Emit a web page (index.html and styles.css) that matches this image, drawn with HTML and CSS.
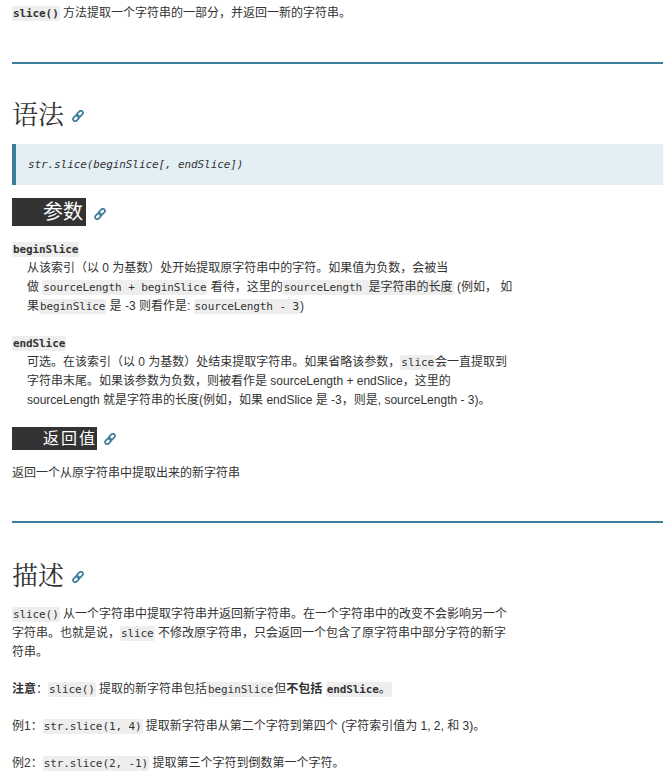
FILE: index.html
```html
<!DOCTYPE html>
<html lang="zh-CN">
<head>
<meta charset="utf-8">
<title>slice</title>
<link rel="stylesheet" href="styles.css">
</head>
<body>
<svg class="sprite" width="0" height="0" aria-hidden="true">
  <symbol id="link" viewBox="0 0 14 14">
    <g fill="none" stroke="currentColor" stroke-width="2">
      <rect x="0.6" y="4.6" width="8" height="4.8" rx="2.4" transform="rotate(-45 4.6 7) translate(-1.6 1.9)"/>
      <rect x="5.4" y="4.6" width="8" height="4.8" rx="2.4" transform="rotate(-45 9.4 7) translate(1.6 -1.9)"/>
    </g>
  </symbol>
</svg>
<main class="page">
  <p class="text"><code class="strong">slice()</code> 方法提取一个字符串的一部分，并返回一新的字符串。</p>
  <hr class="rule rule-first">
  <h2 class="title title-first">语法 <a class="anchor"><svg class="icon"><use href="#link"/></svg></a></h2>
  <pre class="syntax"><code>str.slice(beginSlice[, endSlice])</code></pre>
  <h3 class="bar bar-large"><span class="bar-label">参数</span><a class="anchor"><svg class="icon"><use href="#link"/></svg></a></h3>
  <dl class="params">
    <dt><code class="strong">beginSlice</code></dt>
    <dd>从该索引（以 0 为基数）处开始提取原字符串中的字符。如果值为负数，会被当<span class="keep">做 <code>sourceLength + beginSlice</code></span> 看待，这里的<code>sourceLength <span class="cjk">是字符串的长度</span></code> (例如， 如果<code>beginSlice</code> 是 -3 则看作是: <code>sourceLength - 3</code>)</dd>
    <dt><code class="strong">endSlice</code></dt>
    <dd>可选。在该索引（以 0 为基数）处结束提取字符串。如果省略该参数，<code>slice</code>会一直提取到字符串末尾。如果该参数为负数，则被看作是 sourceLength + endSlice，这里的 sourceLength 就是字符串的长度(例如，如果 endSlice 是 -3，则是, sourceLength - 3)。</dd>
  </dl>
  <h4 class="bar bar-small"><span class="bar-label">返回值</span><a class="anchor"><svg class="icon"><use href="#link"/></svg></a></h4>
  <p class="text text-return">返回一个从原字符串中提取出来的新字符串</p>
  <hr class="rule rule-second">
  <h2 class="title title-second">描述 <a class="anchor"><svg class="icon"><use href="#link"/></svg></a></h2>
  <p class="text text-gap"><code>slice()</code> 从一个字符串中提取字符串并返回新字符串。在一个字符串中的改变不会影响另一个字符串。也就是说，<code>slice</code> 不修改原字符串，只会返回一个包含了原字符串中部分字符的新字符串。</p>
  <p class="text text-gap"><strong>注意</strong>：<code>slice()</code> 提取的新字符串包括<code>beginSlice</code>但<strong>不包括</strong> <code class="strong">endSlice<span class="cjk">。</span></code></p>
  <p class="text text-gap">例1：<code>str.slice(1, 4)</code> 提取新字符串从第二个字符到第四个 (字符索引值为 1, 2, 和 3)。</p>
  <p class="text text-gap">例2：<code>str.slice(2, -1)</code> 提取第三个字符到倒数第一个字符。</p>
</main>
</body>
</html>
```
FILE: styles.css
```css
* { box-sizing: border-box; }
html, body { margin: 0; padding: 0; background: #fff; overflow: hidden; }
body {
  font-family: "Liberation Sans", "Noto Sans CJK SC", sans-serif;
  font-size: 12px;
  line-height: 19px;
  color: #333;
}
.sprite { position: absolute; }
.page { padding: 4px 0 0 12px; }
.text { margin: 0; max-width: 504px; }
.text-return { margin-top: 14px; }
.text-gap { margin-top: 18px; }
.title + .text-gap { margin-top: 14px; }
.keep { white-space: nowrap; }
code {
  font-family: "DejaVu Sans Mono", "Noto Sans CJK SC", monospace;
  font-size: 11px;
  letter-spacing: -0.1px;
  background: #eee;
  padding: 1px 1px;
  border-radius: 2px;
}
code .cjk { font-size: 12px; letter-spacing: 0; font-weight: normal; }
code.strong { font-weight: bold; }
.rule { border: 0; height: 2px; background: #3d7e9a; margin: 0; }
.rule-first { margin-top: 39px; }
.rule-second { margin-top: 38px; }
.title {
  font-family: "Noto Serif CJK SC", "Liberation Serif", "Noto Sans CJK SC", serif;
  font-weight: normal;
  font-size: 26px;
  line-height: 34px;
  color: #333;
  display: flex;
  align-items: center;
  gap: 8px;
}
.title-first { margin: 32px 0 14px; }
.title-second { margin: 34px 0 0; }
.title .anchor { margin-top: 5px; }
.anchor { color: #3d7e9a; display: inline-flex; }
.icon { width: 12px; height: 12px; }
.syntax {
  margin: 0;
  height: 41px;
  padding: 11px 0 0 12px;
  background: #e4eef5;
  border-left: 4px solid #3d7e9a;
  font-style: italic;
  line-height: 19px;
}
.syntax code { background: none; padding: 0; color: #333; }
.bar {
  margin: 13px 0 0;
  display: flex;
  align-items: center;
  gap: 8px;
  font-weight: normal;
  color: #fff;
}
.bar-large .anchor { margin-top: 3px; }
.bar-label { background: #333; padding-left: 31px; display: block; }
.bar-large .bar-label { font-size: 20px; line-height: 28px; padding-right: 3px; }
.bar-small { margin-top: 0; gap: 7px; }
.bar-small .anchor { margin-top: 1px; }
.bar-small .bar-label { font-size: 16px; line-height: 23px; letter-spacing: 2px; padding-right: 0; }
.params { margin: 14px 0 0; max-width: 504px; }
.params dt { margin: 0; }
.params dd { margin: 0 0 18px 15px; }
.params dd:last-child { margin-bottom: 17px; }
```
